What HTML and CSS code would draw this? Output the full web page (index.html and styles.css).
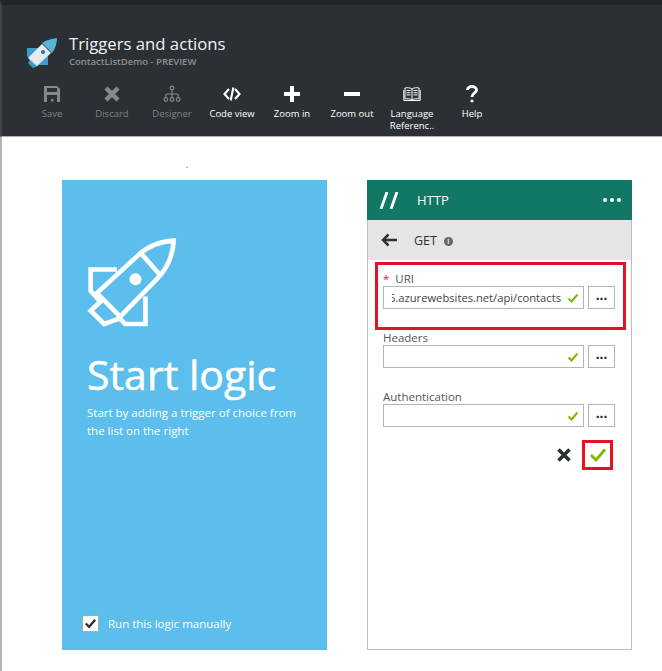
FILE: index.html
```html
<!DOCTYPE html>
<html lang="en">
<head>
  <meta charset="UTF-8">
  <meta name="viewport" content="width=device-width, initial-scale=1.0">
  <title>Triggers and actions</title>
  <link rel="stylesheet" href="styles.css">
</head>
<body>
  <header class="blade-header">
    <div class="blade-title">
      <svg class="logo" viewBox="0 0 30 30">
        <path d="M0 10 H13 V24 L11 28 L6 30 L1 25 L3 22 L0 18 Z" fill="#3c9cd0"/>
        <path d="M21 16 V27 H11 Z" fill="#3c9cd0"/>
        <path d="M1 20 L15 6 L24 15 L10 28 Z" fill="#e8eaeb"/>
        <path d="M15 5 C19 2 25 1 30 0 C30 6 28 11 25 15 Z" fill="#59b4d9"/>
        <circle cx="16" cy="14" r="2" fill="#0f76c8"/>
      </svg>
      <div>
        <h1>Triggers and actions</h1>
        <p>ContactListDemo - PREVIEW</p>
      </div>
    </div>
    <div class="toolbar">
      <div class="tool disabled">
        <svg viewBox="0 0 18 18"><path d="M1 1 H14 L17 4 V17 H1 Z M4 3 V7 H14 V3 Z M4 10 V17 H14 V10 Z" fill="currentColor" fill-rule="evenodd"/><rect x="8" y="14" width="2.4" height="2.4" fill="currentColor"/></svg>
        <span>Save</span>
      </div>
      <div class="tool disabled">
        <svg viewBox="0 0 18 18"><path d="M3 3 L15 15 M15 3 L3 15" stroke="currentColor" stroke-width="4.5"/></svg>
        <span>Discard</span>
      </div>
      <div class="tool disabled">
        <svg viewBox="0 0 18 18" fill="none" stroke="currentColor" stroke-width="1.2"><circle cx="9" cy="3" r="1.8"/><circle cx="2.8" cy="14.5" r="1.8"/><circle cx="9" cy="14.5" r="1.8"/><circle cx="15.2" cy="14.5" r="1.8"/><path d="M9 5 V12.5 M9 9 H4 Q2.8 9 2.8 10.5 V12.5 M9 9 H14 Q15.2 9 15.2 10.5 V12.5"/></svg>
        <span>Designer</span>
      </div>
      <div class="tool">
        <svg viewBox="0 0 18 18" fill="none" stroke="currentColor" stroke-width="2.1"><path d="M6 4 L1.5 9 L6 14 M12 4 L16.5 9 L12 14 M10.3 2.5 L7.7 15.5"/></svg>
        <span>Code view</span>
      </div>
      <div class="tool">
        <svg viewBox="0 0 18 18"><path d="M7 1 H11 V7 H17 V11 H11 V17 H7 V11 H1 V7 H7 Z" fill="currentColor"/></svg>
        <span>Zoom in</span>
      </div>
      <div class="tool">
        <svg viewBox="0 0 18 18"><path d="M1 7 H17 V11 H1 Z" fill="currentColor"/></svg>
        <span>Zoom out</span>
      </div>
      <div class="tool">
        <svg viewBox="0 0 18 18" fill="none" stroke="currentColor" stroke-width="1"><path d="M9 4 C7 2.5 4 2.5 2 3 V14 C4 13.5 7 13.5 9 15 C11 13.5 14 13.5 16 14 V3 C14 2.5 11 2.5 9 4 Z M9 4 V15 M.8 5 V15.5 H17.2 V5 M3.5 5.5 H7.5 M3.5 7.7 H7.5 M3.5 9.9 H7.5 M10.5 5.5 H14.5 M10.5 7.7 H14.5 M10.5 9.9 H14.5"/></svg>
        <span>Language Referenc..</span>
      </div>
      <div class="tool">
        <svg viewBox="0 0 18 18" fill="none" stroke="currentColor" stroke-width="2.8"><path d="M4.5 5 C4.5 2.5 6.5 1.5 9 1.5 C11.5 1.5 13.5 3 13.5 5 C13.5 8 9 8 9 12"/><circle cx="9" cy="16" r="1" stroke-width="1.2" fill="currentColor"/></svg>
        <span>Help</span>
      </div>
    </div>
  </header>

  <main class="designer">
    <span class="speck"></span>

    <section class="start-card">
      <svg class="rocket" viewBox="80 40 280 280" fill="none" stroke="#fff" stroke-width="14">
        <path d="M341 54 C290 57 258 75 232 100 L110 212 L180 283 L290 170 C320 140 338 105 341 54 Z"/>
        <path d="M245 95 L298 155"/>
        <path d="M170 141 H91 V205 L120 238 L91 265 L132 305 L178 288"/>
        <path d="M256 222 V305 H195 L178 288"/>
        <circle cx="226" cy="170" r="18" fill="#fff" stroke="none"/>
      </svg>
      <h2>Start logic</h2>
      <p class="start-text">Start by adding a trigger of choice from the list on the right</p>
      <label class="manual">
        <span class="checkbox">
          <svg viewBox="0 0 16 16" fill="none" stroke="#2b3034" stroke-width="2.4"><path d="M3 8 L6.5 11.5 L13 4"/></svg>
        </span>
        Run this logic manually
      </label>
    </section>

    <section class="http-panel">
      <div class="panel-head">
        <svg class="slashes" viewBox="0 0 20 17" fill="none" stroke="#fff" stroke-width="2.8"><path d="M8 0 L2 17 M18 0 L12 17"/></svg>
        <span class="panel-name">HTTP</span>
        <span class="dots"><i></i><i></i><i></i></span>
      </div>
      <div class="panel-sub">
        <svg class="back" viewBox="0 0 16 14" fill="none" stroke="#2b3034" stroke-width="2.5"><path d="M7.5 1.5 L2 7 L7.5 12.5 M2 7 H16"/></svg>
        <span class="method">GET</span>
        <span class="info">i</span>
      </div>
      <div class="fields">
        <div class="field">
          <label><span class="req">*</span> URI</label>
          <div class="field-row">
            <div class="input">
              <span class="value">6.azurewebsites.net/api/contacts</span>
              <svg class="ok" viewBox="0 0 12 12" fill="none" stroke="#7fba00" stroke-width="2"><path d="M1.5 6.5 L4.5 9.5 L10.5 2.5"/></svg>
            </div>
            <button class="more">...</button>
          </div>
        </div>
        <div class="field">
          <label>Headers</label>
          <div class="field-row">
            <div class="input">
              <svg class="ok" viewBox="0 0 12 12" fill="none" stroke="#7fba00" stroke-width="2"><path d="M1.5 6.5 L4.5 9.5 L10.5 2.5"/></svg>
            </div>
            <button class="more">...</button>
          </div>
        </div>
        <div class="field">
          <label>Authentication</label>
          <div class="field-row">
            <div class="input">
              <svg class="ok" viewBox="0 0 12 12" fill="none" stroke="#7fba00" stroke-width="2"><path d="M1.5 6.5 L4.5 9.5 L10.5 2.5"/></svg>
            </div>
            <button class="more">...</button>
          </div>
        </div>
        <div class="actions">
          <svg class="cancel" viewBox="0 0 14 14" fill="none" stroke="#2b3034" stroke-width="3.6"><path d="M1.5 1.5 L12.5 12.5 M12.5 1.5 L1.5 12.5"/></svg>
          <span class="confirm">
            <svg viewBox="0 0 16 14" fill="none" stroke="#7fba00" stroke-width="2.8"><path d="M1 7 L6 12 L15 1.5"/></svg>
          </span>
        </div>
      </div>
      <div class="callout"></div>
    </section>
  </main>
</body>
</html>
```

FILE: styles.css
```css
html, body {
  margin: 0;
  padding: 0;
  height: 100%;
}
body {
  font-family: "Open Sans", "Noto Sans", sans-serif;
  background-color: #fff;
  color: #444;
  overflow: hidden;
}
h1, h2, p {
  margin: 0;
  font-weight: normal;
}

/* top blade */
.blade-header {
  box-sizing: border-box;
  height: 137px;
  background-color: #2b3034;
  border-top: 5px solid #212529;
  border-left: 2px solid #3d4246;
  border-bottom: 1px solid #b0b0b0;
  padding: 28px 0 0 20px;
}
.blade-title {
  display: flex;
  align-items: flex-start;
  gap: 12px;
  padding-left: 5px;
}
.logo {
  width: 30px;
  height: 30px;
  margin-top: 5px;
}
.blade-title h1 {
  font-size: 16.7px;
  line-height: 22px;
  color: #f2f2f2;
}
.blade-title p {
  font-size: 9.5px;
  line-height: 14px;
  font-weight: 600;
  color: #8c9094;
}
.toolbar {
  display: flex;
  margin-top: 16px;
}
.tool {
  width: 60px;
  display: flex;
  flex-direction: column;
  align-items: center;
  color: #fff;
}
.tool.disabled {
  color: #85898c;
}
.tool svg {
  width: 18px;
  height: 18px;
  margin-bottom: 5px;
}
.tool span {
  font-size: 9.5px;
  line-height: 12px;
  text-align: center;
  width: 48px;
}
.tool.disabled span {
  color: #7d8184;
}

/* canvas */
.designer {
  position: relative;
  box-sizing: border-box;
  height: 534px;
  border-left: 2px solid #b5b5b5;
  padding: 43px 0 0 60px;
  display: flex;
  align-items: flex-start;
  gap: 40px;
}
.speck {
  position: absolute;
  left: 184px;
  top: 30px;
  width: 2px;
  height: 1px;
  background-color: #aaa;
}
.start-card {
  box-sizing: border-box;
  width: 265px;
  height: 470px;
  background-color: #5cbeed;
  color: #fff;
  padding: 56px 20px 0 25px;
  display: flex;
  flex-direction: column;
}
.rocket {
  width: 93px;
  height: 93px;
}
.start-card h2 {
  font-size: 41px;
  -webkit-text-stroke: 0.5px #fff;
  line-height: 54px;
  margin-top: 18px;
}
.start-text {
  font-size: 11.5px;
  line-height: 18px;
  margin-top: 3px;
}
.manual {
  display: flex;
  align-items: center;
  gap: 9px;
  font-size: 11.5px;
  margin-top: auto;
  margin-bottom: 18px;
  margin-left: -5px;
}
.checkbox {
  box-sizing: border-box;
  width: 17px;
  height: 17px;
  background-color: #fff;
  border: 1px solid #aaa;
  display: flex;
}
.checkbox svg {
  width: 15px;
  height: 15px;
}

/* http card */
.http-panel {
  position: relative;
  box-sizing: border-box;
  width: 265px;
  height: 470px;
  border: 1px solid #bdbdbd;
  border-top: none;
}
.panel-head {
  height: 40px;
  margin: 0 -1px;
  background-color: #117865;
  color: #fff;
  display: flex;
  align-items: center;
  padding: 0 11px 0 12px;
}
.slashes {
  width: 20px;
  height: 17px;
}
.panel-name {
  font-size: 13px;
  margin-left: 18px;
}
.dots {
  margin-left: auto;
  display: flex;
  gap: 3px;
}
.dots i {
  width: 4px;
  height: 4px;
  border-radius: 50%;
  background-color: #fff;
}
.panel-sub {
  height: 40px;
  background-color: #e5e5e5;
  display: flex;
  align-items: center;
  padding-left: 13px;
  color: #333;
}
.back {
  width: 16px;
  height: 14px;
}
.method {
  font-size: 12.5px;
  margin-left: 17px;
}
.info {
  width: 9px;
  height: 9px;
  border-radius: 50%;
  background-color: #666;
  color: #e5e5e5;
  font-size: 7px;
  line-height: 9px;
  font-weight: 700;
  text-align: center;
  margin-left: 7px;
  margin-top: 2px;
}
.fields {
  padding: 9px 16px 0 15px;
}
.field {
  height: 59px;
}
.field label {
  display: block;
  font-size: 11.5px;
  line-height: 19px;
  margin-bottom: -2px;
  color: #555;
}
.req {
  color: #e81123;
  margin-right: 3px;
}
.field-row {
  display: flex;
  gap: 4px;
}
.input {
  box-sizing: border-box;
  flex: 1;
  min-width: 0;
  height: 23px;
  border: 1px solid #b5b5b5;
  display: flex;
  align-items: center;
  justify-content: flex-end;
  padding: 0 4px 0 8px;
}
.value {
  flex: 1;
  min-width: 0;
  display: flex;
  justify-content: flex-end;
  overflow: hidden;
  font-size: 11.2px;
  white-space: nowrap;
  color: #444;
  margin-right: 6px;
}
.ok {
  flex: none;
  width: 12px;
  height: 12px;
}
.more {
  box-sizing: border-box;
  width: 27px;
  height: 23px;
  padding: 0 0 6px;
  background-color: #fff;
  border: 1px solid #b5b5b5;
  font-family: "Liberation Sans", sans-serif;
  font-size: 14px;
  font-weight: 700;
  line-height: 1;
  color: #222;
}
.actions {
  display: flex;
  justify-content: flex-end;
  align-items: center;
  gap: 11px;
  margin-top: -6px;
  padding-right: 2px;
}
.cancel {
  width: 14px;
  height: 14px;
}
.confirm {
  box-sizing: border-box;
  width: 31px;
  height: 30px;
  border: 3px solid #e81123;
  display: flex;
  align-items: center;
  justify-content: center;
}
.confirm svg {
  width: 16px;
  height: 14px;
}
.callout {
  position: absolute;
  left: 7px;
  top: 82px;
  width: 251px;
  height: 68px;
  box-sizing: border-box;
  border: 3px solid #e81123;
}
```
